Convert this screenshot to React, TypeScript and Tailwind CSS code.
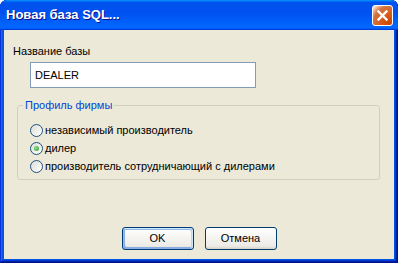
import React from "react";

const font = { fontFamily: '"Liberation Sans", Arial, sans-serif' };

function Radio({ checked, label }: { checked?: boolean; label: string }) {
  return (
    <div className="flex h-[18px] items-center">
      <span className="ml-[13px] flex h-[13px] w-[13px] items-center justify-center rounded-full border border-[#1c5180] bg-[linear-gradient(135deg,#dcdcd7,#ffffff)]">
        {checked && (
          <span className="h-[5px] w-[5px] rounded-full bg-[radial-gradient(circle_at_40%_40%,#8ee08a,#21a121)]" />
        )}
      </span>
      <span className="ml-[2px] text-[11px] leading-[13px] text-black">{label}</span>
    </div>
  );
}

export default function App() {
  return (
    <div style={font} className="h-[263px] w-[398px] bg-white">
      <div className="flex h-[263px] w-[398px] flex-col overflow-hidden rounded-t-[7px] bg-[#0054e3] px-[4px] pb-[4px] shadow-[inset_-1px_-1px_#00138c,inset_1px_1px_#0831d9,inset_-2px_-2px_#001ea0,inset_2px_2px_#166aee,inset_-3px_-3px_#003bda,inset_3px_3px_#0855dd]">
        <div className="-mx-[4px] flex h-[30px] shrink-0 items-center justify-between rounded-t-[7px] bg-[linear-gradient(180deg,#0997ff,#0053ee_8%,#0050ee_40%,#0066ff_88%,#0066ff_93%,#005bff_95%,#003dd7_96%,#003dd7)] pl-[6px] pr-[5px]">
          <span className="text-[13px] font-bold leading-[16px] text-white [text-shadow:1px_1px_#0f1089]">
            Новая база SQL...
          </span>
          <span className="flex h-[21px] w-[21px] items-center justify-center rounded-[3px] border border-white bg-[radial-gradient(circle_at_90%_90%,#cc4600_0%,#dc6527_55%,#cd7546_70%,#ffccb2_90%,#ffffff_100%)]">
            <svg width="13" height="13" viewBox="0 0 13 13">
              <path d="M2.5 2.5 L10.5 10.5 M10.5 2.5 L2.5 10.5" stroke="white" strokeWidth="2.4" strokeLinecap="square" />
            </svg>
          </span>
        </div>
        <div className="flex flex-1 flex-col bg-[#ece9d8]">
          <div className="ml-[9px] mt-[15px] text-[11px] leading-[13px] text-black">Название базы</div>
          <div className="ml-[26px] mt-[4px] flex h-[26px] w-[226px] items-center border border-[#7f9db9] bg-white px-[4px] text-[11px] leading-[13px] text-black">
            DEALER
          </div>
          <fieldset className="ml-[13px] mr-[14px] mt-[11px] rounded-[3px] border border-[#d0d0bf] px-[5px] pb-[4px] pt-[9px]">
            <legend className="px-[2px] text-[11px] leading-[13px] text-[#0046d5]">Профиль фирмы</legend>
            <div className="-ml-[6px] flex flex-col">
              <Radio label="независимый производитель" />
              <Radio checked label="дилер" />
              <Radio label="производитель сотрудничающий с дилерами" />
            </div>
          </fieldset>
          <div className="mt-[47px] flex justify-center gap-[11px]">
            <button className="flex h-[23px] w-[72px] items-center justify-center rounded-[3px] border border-[#003c74] bg-[linear-gradient(180deg,#ffffff,#ecebe6_86%,#d6d0c5)] text-[11px] leading-[13px] text-black shadow-[inset_-1px_1px_#cee7ff,inset_1px_2px_#98b8ea,inset_-2px_2px_#bcd4f6,inset_1px_-1px_#89ade4,inset_2px_-2px_#89ade4]">
              OK
            </button>
            <button className="flex h-[23px] w-[72px] items-center justify-center rounded-[3px] border border-[#003c74] bg-[linear-gradient(180deg,#ffffff,#ecebe6_86%,#d6d0c5)] text-[11px] leading-[13px] text-black">
              Отмена
            </button>
          </div>
        </div>
      </div>
    </div>
  );
}
